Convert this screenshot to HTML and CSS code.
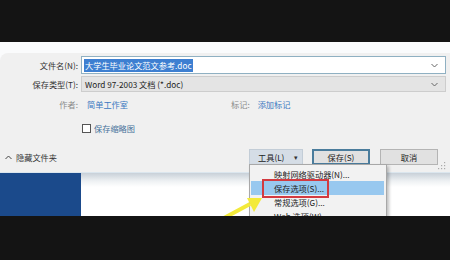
FILE: index.html
```html
<!DOCTYPE html>
<html>
<head>
<meta charset="utf-8">
<link rel="stylesheet" href="styles.css">
</head>
<body>
<div class="screen">
  <div class="topband"></div>
  <div class="window">
    <div class="dialog">
      <div class="form">
        <label class="lbl">文件名(N):</label>
        <div class="field field-name">
          <span class="sel">大学生毕业论文范文参考.doc</span>
          <svg class="chev" width="7" height="5" viewBox="0 0 7 5"><path d="M0.5 1 L3.5 4 L6.5 1" fill="none" stroke="#666" stroke-width="1"/></svg>
        </div>
        <label class="lbl lbl-type">保存类型(T):</label>
        <div class="field field-type">
          <span class="val">Word 97-2003 文档 (*.doc)</span>
          <svg class="chev" width="7" height="5" viewBox="0 0 7 5"><path d="M0.5 1 L3.5 4 L6.5 1" fill="none" stroke="#666" stroke-width="1"/></svg>
        </div>
        <label class="lbl lbl-meta">作者:</label>
        <div class="meta">
          <span class="link author">简单工作室</span>
          <span class="muted">标记:</span>
          <span class="link">添加标记</span>
        </div>
        <div class="spacer"></div>
        <div class="thumb">
          <span class="box"></span>
          <span class="thumb-text">保存缩略图</span>
        </div>
      </div>
      <div class="footer">
        <div class="hide">
          <svg width="7" height="5" viewBox="0 0 7 5"><path d="M0.5 4 L3.5 1 L6.5 4" fill="none" stroke="#444" stroke-width="1"/></svg>
          <span>隐藏文件夹</span>
        </div>
        <div class="buttons">
          <div class="btn btn-tools"><span>工具(L)</span><span class="caret">▾</span></div>
          <div class="btn btn-save">保存(S)</div>
          <div class="btn btn-cancel">取消</div>
        </div>
      </div>
      <svg class="grip" width="8" height="8" viewBox="0 0 8 8">
        <rect x="6" y="0" width="1.2" height="1.2" fill="#aaa"/>
        <rect x="3" y="3" width="1.2" height="1.2" fill="#aaa"/>
        <rect x="6" y="3" width="1.2" height="1.2" fill="#aaa"/>
        <rect x="0" y="6" width="1.2" height="1.2" fill="#aaa"/>
        <rect x="3" y="6" width="1.2" height="1.2" fill="#aaa"/>
        <rect x="6" y="6" width="1.2" height="1.2" fill="#aaa"/>
      </svg>
    </div>
    <div class="lower">
      <div class="nav"></div>
      <div class="content"></div>
    </div>
  </div>
  <div class="menu">
    <div class="item">映射网络驱动器(N)...</div>
    <div class="item item-hl">保存选项(S)...</div>
    <div class="item">常规选项(G)...</div>
    <div class="item">Web 选项(W)...</div>
    <div class="redbox"></div>
  </div>
  <svg class="arrow" width="60" height="40" viewBox="0 0 60 40">
    <path d="M2 34 L28 20" stroke="#f3ea3a" stroke-width="4" fill="none"/>
    <polygon points="40,14 25,14 32,28" fill="#f3ea3a"/>
  </svg>
</div>
</body>
</html>
```
FILE: styles.css
```css
* { box-sizing: border-box; margin: 0; padding: 0; }
body {
  width: 450px;
  height: 260px;
  overflow: hidden;
  background: #141414;
  font-family: "Noto Sans CJK SC", "Noto Sans", sans-serif;
  font-size: 8.2px;
  color: #2b2b2b;
}
.screen {
  position: relative;
  height: 216px;
  overflow: hidden;
}
.topband { height: 42px; background: #141414; }
.window {
  background: #fafbfc;
  padding-top: 11px;
}
.dialog {
  position: relative;
  height: 120px;
  background: #f0f0f0;
  border-top-left-radius: 8px;
  border-bottom: 1px solid #dbe6ee;
  display: flex;
  flex-direction: column;
  padding-top: 3px;
}
.form {
  display: grid;
  grid-template-columns: 78px 1fr;
  column-gap: 3px;
  padding-right: 4px;
}
.lbl {
  text-align: right;
  line-height: 18px;
  color: #333;
  white-space: nowrap;
}
.lbl-type { margin-top: 2px; line-height: 16px; }
.lbl-meta { margin-top: 4px; line-height: 16px; color: #8a8a8a; }
.field {
  position: relative;
  display: flex;
  align-items: center;
  height: 18px;
  padding-left: 2px;
  white-space: nowrap;
}
.field-name {
  background: #fff;
  border: 1px solid #8fb0c2;
}
.field-type {
  margin-top: 2px;
  height: 16px;
  background: #e4e4e4;
  border: 1px solid #cdcdcd;
  padding-left: 3px;
  color: #222;
}
.sel {
  background: #3d7fd1;
  color: #fff;
  line-height: 13px;
  padding: 0 1px;
}
.chev { position: absolute; right: 7px; top: 50%; margin-top: -2.5px; }
.meta {
  margin-top: 4px;
  display: flex;
  align-items: center;
  height: 16px;
  padding-left: 6px;
  white-space: nowrap;
}
.author { width: 144px; }
.muted { color: #8a8a8a; margin-right: 8px; }
.link { color: #3a78c0; }
.thumb {
  margin-top: 8px;
  height: 16px;
  display: flex;
  align-items: center;
  padding-left: 1px;
}
.box {
  width: 9px;
  height: 9px;
  border: 1px solid #555;
  background: #fff;
  margin-right: 3px;
}
.thumb-text { color: #45709a; }
.footer {
  margin-top: 13px;
  height: 16px;
  display: flex;
  align-items: center;
  justify-content: space-between;
  padding: 0 12px 0 5px;
}
.hide { display: flex; align-items: center; gap: 4px; color: #333; }
.buttons { display: flex; gap: 9px; }
.btn {
  height: 16px;
  display: flex;
  align-items: center;
  justify-content: center;
  background: #e1e1e1;
  border: 1px solid #b4b4b4;
  color: #222;
  white-space: nowrap;
}
.btn-tools {
  width: 54px;
  justify-content: flex-start;
  padding-left: 8px;
  background: #d5dde6;
  border-color: #c3cdd7;
  gap: 10px;
}
.caret { font-size: 7px; color: #333; }
.btn-save {
  width: 58px;
  border: 2px solid #4a7c9c;
  margin-right: 1px;
}
.btn-cancel { width: 58px; }
.grip { position: absolute; right: 4px; bottom: 2px; }
.lower {
  height: 43px;
  display: flex;
}
.nav { width: 81px; background: #1b4a8b; }
.content {
  flex: 1;
  background: linear-gradient(#c8d0d8, #eef1f3 8px, #fff 14px);
}
.menu {
  position: absolute;
  left: 249px;
  top: 164px;
  width: 138px;
  height: 70px;
  background: #f2f2f2;
  border: 1px solid #a8a8a8;
  box-shadow: 2px 2px 3px rgba(0,0,0,0.25);
  padding: 2px 2px 0 1px;
}
.item {
  height: 14px;
  line-height: 14px;
  padding-left: 23px;
  color: #222;
  white-space: nowrap;
}
.item-hl { background: #98c8ef; }
.redbox {
  position: absolute;
  left: 12px;
  top: 14px;
  width: 67px;
  height: 19px;
  border: 2px solid #d33a40;
}
.arrow { position: absolute; left: 222px; top: 184px; }
```
